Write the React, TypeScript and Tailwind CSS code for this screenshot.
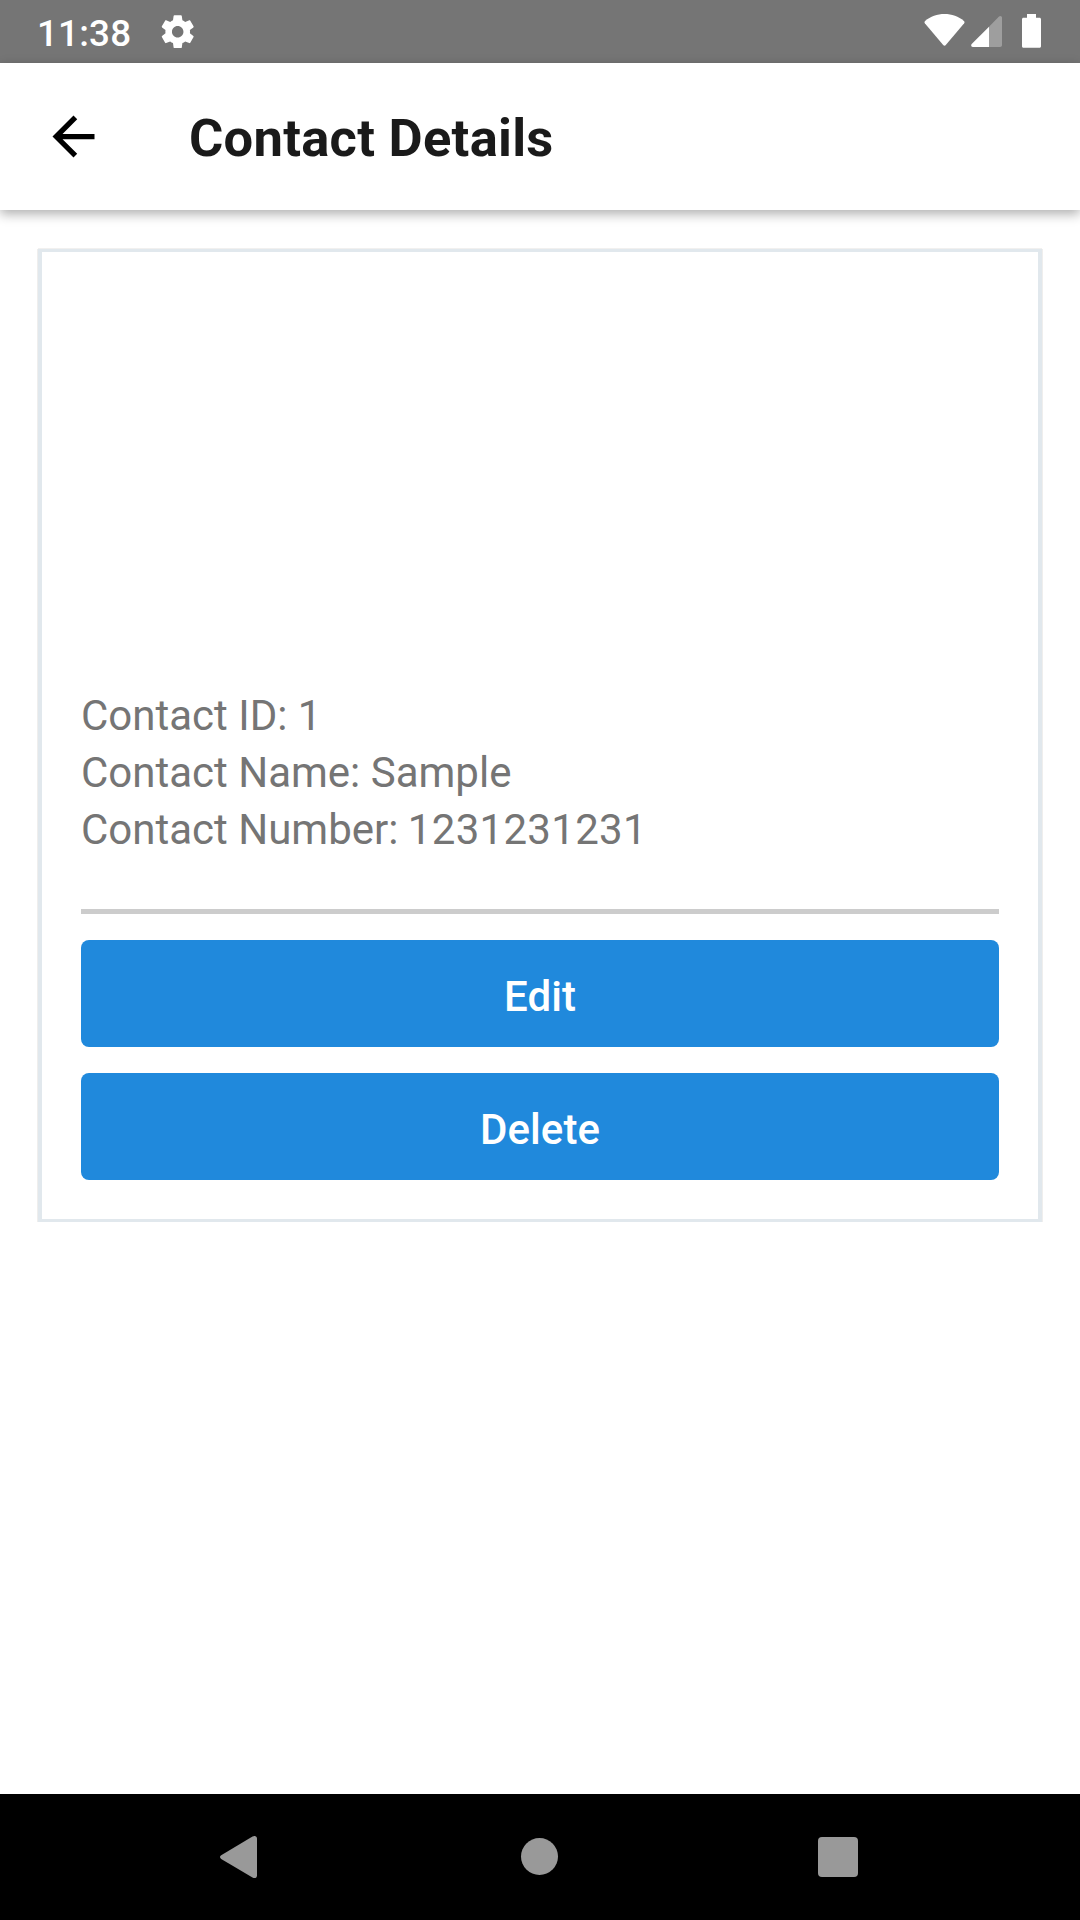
import React from "react";

const details = [
  { label: "Contact ID:", value: "1" },
  { label: "Contact Name:", value: "Sample" },
  { label: "Contact Number:", value: "1231231231" },
];
const actions = ["Edit", "Delete"];

function StatusBar() {
  return (
    <div className="flex h-[63px] items-start justify-between bg-[#757575] text-white">
      <div className="flex items-start pl-[37px]">
        <span className="w-[121px] pt-[12px] text-[36.75px] font-medium leading-[43px] tracking-[0.2px]">11:38</span>
        <svg className="mt-[12px] h-[39.4px] w-[39.4px]" viewBox="0 0 24 24" fill="currentColor">
          <path d="M19.43 12.98c.04-.32.07-.64.07-.98s-.03-.66-.07-.98l2.11-1.65c.19-.15.24-.42.12-.64l-2-3.46c-.12-.22-.39-.3-.61-.22l-2.49 1c-.52-.4-1.08-.73-1.69-.98l-.38-2.65C14.46 2.18 14.25 2 14 2h-4c-.25 0-.46.18-.49.42l-.38 2.65c-.61.25-1.17.59-1.69.98l-2.49-1c-.23-.09-.49 0-.61.22l-2 3.46c-.13.22-.07.49.12.64l2.11 1.65c-.04.32-.07.65-.07.98s.03.66.07.98l-2.11 1.65c-.19.15-.24.42-.12.64l2 3.46c.12.22.39.3.61.22l2.49-1c.52.4 1.08.73 1.69.98l.38 2.65c.03.24.24.42.49.42h4c.25 0 .46-.18.49-.42l.38-2.65c.61-.25 1.17-.59 1.69-.98l2.49 1c.23.09.49 0 .61-.22l2-3.46c.12-.22.07-.49-.12-.64l-2.11-1.65zM12 15.5c-1.93 0-3.5-1.57-3.5-3.5s1.57-3.5 3.5-3.5 3.5 1.57 3.5 3.5-1.57 3.5-3.5 3.5z" />
        </svg>
      </div>
      <div className="flex items-start pr-[38px]">
        <svg className="mt-[14px] h-[33px] w-[42px]" viewBox="0 0 42 33" fill="currentColor">
          <path d="M.8 9.300C.3 8.500.4 7.500 1.100 6.900C6.500 2.400 13.100 0 20.500 0s14 2.400 19.400 6.900c.7.600.8 1.600.3 2.400L21.800 31.100c-.7.8-1.900.8-2.600 0z" />
        </svg>
        <svg className="mt-[16px] ml-[4px] h-[31px] w-[33px]" viewBox="0 0 33 31" fill="currentColor">
          <path d="M19 10.800V31H3C1.300 31 .5 29.300 1.700 28z" />
          <path opacity=".3" d="M19 10.800L29 .6c1.200-1.200 3-.4 3 1.300V29c0 1.200-.8 2-2 2H19z" />
        </svg>
        <svg className="mt-[14px] ml-[18px] h-[34px] w-[21px]" viewBox="0 0 21 34" fill="currentColor">
          <path d="M6 0h9v3.700h3.500c.9 0 1.500.6 1.500 1.500v27.100c0 .9-.6 1.500-1.500 1.500h-16c-.9 0-1.500-.6-1.500-1.500V5.200c0-.9.6-1.500 1.500-1.500H6z" />
        </svg>
      </div>
    </div>
  );
}

export default function App() {
  return (
    <div className="flex h-[1920px] w-[1080px] flex-col overflow-hidden bg-white font-[Roboto,sans-serif]">
      <StatusBar />
      <header className="flex h-[147px] items-center bg-white pl-[42px] shadow-[0_4px_11px_rgba(0,0,0,0.32)]">
        <svg className="h-[63px] w-[63px]" viewBox="0 0 24 24">
          <path d="M20 11H7.830l5.590-5.590L12 4l-8 8 8 8 1.410-1.410L7.830 13H20v-2z" />
        </svg>
        <h1 className="ml-[84px] pt-[3px] text-[52.5px] font-bold leading-[62px] tracking-[0.27px] text-[#1a1a1a]">Contact Details</h1>
      </header>

      <main className="flex-1 px-[38px] pt-[39px]">
        <section className="h-[973px] border-x-4 border-y-3 border-[#e1e8ed] bg-white px-[39px] pt-[435px] shadow-[1px_0_0_#efeeed,-1px_0_0_#efeeed,0_-1px_0_#f1f0ef]">
          <div className="text-[42px] leading-[57px] text-[#757575]">
            {details.map(({ label, value }) => (
              <p key={label}>
                {label} <span className={/^\d{2,}$/.test(value) ? "-ml-px tracking-[0.3px]" : ""}>{value}</span>
              </p>
            ))}
          </div>
          <hr className="mt-[51px] h-[5px] border-0 bg-[#cccccc]" />
          <div className="mt-[26px] flex flex-col gap-[26px]">
            {actions.map((label) => (
              <button key={label} className="h-[107px] rounded-[8px] bg-[#2089dc] pt-[6px] text-[42px] font-medium leading-[50px] tracking-[0.1px] text-white">
                {label}
              </button>
            ))}
          </div>
        </section>
      </main>

      <nav className="flex h-[126px] items-start bg-black pl-[219px] text-[#999999]">
        <svg className="mt-[41px] h-[44px] w-[40px]" viewBox="0 0 40 44" fill="currentColor">
          <path d="M2.200 20.200L33.500 1.500C35.800.2 38 1.200 38 3.500v37c0 2.300-2.200 3.300-4.500 2L2.200 24c-1.600-1-1.600-2.800 0-3.800z" />
        </svg>
        <div className="mt-[44px] ml-[262px] h-[37px] w-[37px] rounded-full bg-[#999999]" />
        <div className="mt-[43px] ml-[260px] h-[40px] w-[40px] rounded-[4px] bg-[#999999]" />
      </nav>
    </div>
  );
}
